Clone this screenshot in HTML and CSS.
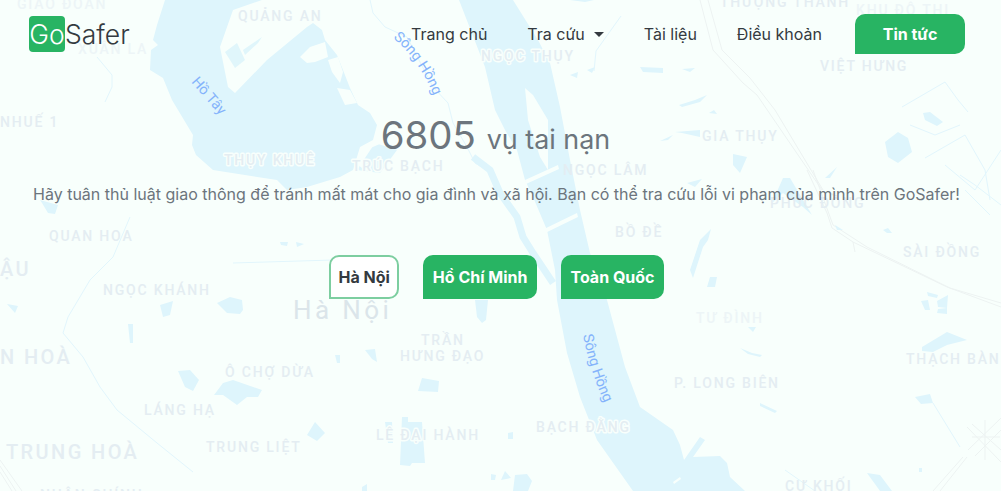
FILE: index.html
```html
<!DOCTYPE html>
<html lang="vi">
<head>
<meta charset="utf-8">
<title>GoSafer</title>
<link rel="stylesheet" href="styles.css">
</head>
<body>
<svg class="map" viewBox="0 0 1001 491" width="1001" height="491" aria-hidden="true">
  <g class="road">
    <polyline points="700,0 713,50 743,83 757,95 822,190"/>
    <polyline points="708,0 722,50 750,78 775,110 823,190"/>
    <polyline points="807,170 827,213 832,228 853,242 947,287 1001,307"/>
    <polyline points="813,170 833,225 867,247 950,288 1001,303"/>
    <polyline points="853,242 855,252"/>
    <polyline points="963,457 933,491"/>
    <polyline points="967,457 940,491"/>
    <polyline points="967,427 1001,462"/>
    <polyline points="972,424 1001,450"/>
    <polyline points="968,450 1001,418"/>
    <polyline points="975,456 1001,430"/>
    <polyline points="985,420 985,460"/>
    <polyline points="972,437 1000,437"/>
    <polyline points="0,460 22,491"/>
    <polyline points="0,466 16,491"/>
    <polyline points="0,472 12,491"/>
  </g>
  <g class="water">
    <polygon points="165,0 157,25 153,40 158,45 151,50 150,70 163,78 172,100 178,110 193,135 192,145 196,155 213,170 277,180 287,190 307,187 340,177 353,170 357,157 360,147 373,140 377,125 370,113 358,105 350,88 343,70 337,55 325,40 322,30 313,23 307,27 267,60 235,93 228,87 220,47 233,10 262,0"/>
    <polygon points="232,0 253,0 233,8"/>
    <polygon points="375,143 397,150 380,173 357,170"/>
    <polygon points="459,0 513,0 538,40 550,63 560,107 570,160 580,210 590,253 600,280 607,300 625,367 640,407 673,430 680,445 684,460 700,437 705,440 693,457 720,456 727,463 730,477 745,491 633,491 597,440 580,397 567,353 557,300 555,270 547,230 533,197 525,180 517,150 505,130 495,110 485,67"/>
    <polygon points="42,203 40,200 58,205 55,214 48,213"/>
    <polygon points="160,305 173,301 170,315 163,317"/>
    <polygon points="217,303 230,297 242,300 243,310 240,314 227,313"/>
    <polygon points="128,324 133,324 133,343 130,343"/>
    <polygon points="178,371 190,370 199,380 193,391 185,387"/>
    <polygon points="214,395 223,383 233,380 262,390 258,397 247,397 237,405 230,400 223,395"/>
    <polygon points="307,435 315,422 325,433 317,441"/>
    <polygon points="7,304 18,306 15,313"/>
    <polygon points="280,242 288,242 287,246 281,245"/>
    <polygon points="296,242 304,244 297,247"/>
    <polygon points="335,355 340,355 340,363 337,363"/>
    <polygon points="475,300 488,300 486,320 482,323 477,317"/>
    <polygon points="365,350 375,349 377,362 372,359"/>
    <polygon points="422,378 439,381 438,392 418,391"/>
    <polygon points="402,417 408,417 408,422 422,422 425,463 412,463 410,466 400,465"/>
    <polygon points="385,422 392,422 393,443 388,443"/>
    <polygon points="508,433 513,432 513,439 508,439"/>
    <polygon points="491,474 496,475 495,480 491,480"/>
    <polygon points="505,471 511,478 501,480"/>
    <polygon points="515,475 527,474 532,481 528,491 513,491"/>
    <polygon points="362,487 367,484 367,491 362,491"/>
    <polygon points="700,240 711,229 708,240 703,247 693,278 690,270"/>
    <polygon points="710,277 717,277 715,287 707,287"/>
    <polygon points="748,327 756,327 753,332"/>
    <polygon points="740,348 752,353 762,355 760,357 748,354"/>
    <polygon points="760,403 777,411 775,413 760,406"/>
    <polygon points="922,347 947,332 967,340 947,345 933,352 922,351"/>
    <polygon points="921,301 928,300 930,310 925,310"/>
    <polygon points="937,301 948,295 947,308 938,307"/>
    <polygon points="927,292 938,295 937,298 928,296"/>
    <polygon points="938,309 947,308 947,314 937,313"/>
    <polygon points="915,397 930,394 933,403 921,404"/>
    <polygon points="883,230 888,228 892,233 887,233"/>
    <polygon points="835,225 843,230 837,230"/>
    <polygon points="783,178 790,178 803,200 812,215 803,207 783,193 772,203"/>
    <polygon points="687,183 702,179 695,187"/>
    <polygon points="885,142 898,132 908,138 912,152 898,163 888,157"/>
    <polygon points="923,113 930,112 943,122 937,126 925,120"/>
    <polygon points="640,67 663,68 663,73 643,72"/>
    <polygon points="682,69 695,68 690,72"/>
    <polygon points="679,105 695,100 707,95 700,102 682,107"/>
    <polygon points="709,113 714,110 717,114"/>
    <polygon points="660,141 673,135 668,140"/>
    <polygon points="675,132 700,130 700,137 682,133"/>
    <polygon points="733,154 747,157 740,173 733,165"/>
    <polygon points="825,178 837,167 830,178"/>
    <polygon points="570,75 578,72 577,78"/>
    <polygon points="587,70 595,67 592,73"/>
    <polygon points="570,0 594,0 585,2"/>
    <polygon points="867,473 880,475 892,491 880,491"/>
    <polygon points="919,468 922,468 922,472 919,472"/>
  </g>
  <g class="stream">
    <polyline points="370,0 373,13 385,27 407,37 433,87 448,103 453,123 467,147 475,163 490,172"/>
    <polyline class="wide" points="473,157 490,170 500,193 517,217 523,237 533,253 553,283"/>
    <polyline points="130,217 113,257 90,280 68,317 63,333 83,357 100,387 117,410 157,443 193,472"/>
    <polyline points="233,263 333,260"/>
    <polyline points="97,57 112,75 112,87 105,102"/>
    <polyline points="621,16 596,51 594,71"/>
    <polyline points="933,403 960,447"/>
    <polyline points="902,107 945,82 958,100 968,112"/>
    <polyline points="910,125 935,135 960,125"/>
    <polyline points="925,158 965,135 985,170 990,200"/>
    <polyline points="945,165 975,190 1001,150"/>
    <polyline points="960,175 975,185 1001,205"/>
    <polyline points="965,190 990,215"/>
    <polyline points="785,470 815,491"/>
  </g>
  <g class="land">
    <polygon points="300,57 310,47 325,42 328,57 315,62 307,63"/>
    <polygon points="328,60 338,57 343,72 340,83 332,72"/>
    <polygon points="337,88 350,90 357,103 345,105"/>
    <polygon points="358,165 362,148 378,140 380,120 383,122 382,143 366,150 362,168"/>
    <polygon points="525,88 533,95 548,120 548,170 540,157 528,120"/>
    <polygon points="525,180 558,165 559,169 526,184"/>
    <polygon points="542,230 577,213 578,217 543,234"/>
    <polygon points="673,482 680,477 681,479 674,484"/>
  </g>
  <g class="pond">
    <polygon points="225,52 237,43 245,60 235,68"/>
    <polygon points="243,50 262,37 258,43 245,55"/>
  </g>
  <g class="label">
    <text x="17" y="9" class="faint">GIAO ĐOÀN</text>
    <text x="238" y="21">QUẢNG AN</text>
    <text x="78" y="54" class="faint">XUÂN LA</text>
    <text x="0" y="127">NHUẾ 1</text>
    <text x="224" y="165" class="halo">THỤY KHUÊ</text>
    <text x="352" y="171" class="halo">TRÚC BẠCH</text>
    <text x="481" y="61" class="halo">NGỌC THỤY</text>
    <text x="820" y="71">VIỆT HƯNG</text>
    <text x="856" y="15" class="faint">KHU ĐÔ THỊ</text>
    <text x="720" y="7">THƯỢNG THANH</text>
    <text x="563" y="175">NGỌC LÂM</text>
    <text x="702" y="141">GIA THỤY</text>
    <text x="770" y="208">PHÚC ĐỒNG</text>
    <text x="615" y="237" class="halo">BỒ ĐỀ</text>
    <text x="903" y="257">SÀI ĐỒNG</text>
    <text x="49" y="241">QUAN HOA</text>
    <text x="0" y="276" class="large">ẬU</text>
    <text x="103" y="295">NGỌC KHÁNH</text>
    <text x="293" y="319" class="city">Hà Nội</text>
    <text x="0" y="364" class="large">N HOÀ</text>
    <text x="421" y="345">TRẦN</text>
    <text x="400" y="361">HƯNG ĐẠO</text>
    <text x="225" y="377">Ô CHỢ DỪA</text>
    <text x="144" y="415">LÁNG HẠ</text>
    <text x="6" y="459" class="large">TRUNG HOÀ</text>
    <text x="206" y="452">TRUNG LIỆT</text>
    <text x="376" y="440" class="halo">LÊ ĐẠI HÀNH</text>
    <text x="536" y="432" class="halo">BẠCH ĐẰNG</text>
    <text x="674" y="388">P. LONG BIÊN</text>
    <text x="696" y="323" class="faint">TƯ ĐÌNH</text>
    <text x="906" y="364">THẠCH BÀN</text>
    <text x="785" y="491">CỰ KHỐI</text>
    <text x="40" y="500">NHÂN CHÍNH</text>
  </g>
  <defs>
    <path id="song1" d="M393,38 Q418,58 433,94"/>
    <path id="song2" d="M583,335 Q590,372 606,406"/>
    <path id="hotay" d="M191,82 L236,134"/>
  </defs>
  <g class="waterlabel">
    <text><textPath href="#song1">Sông Hồng</textPath></text>
    <text><textPath href="#song2">Sông Hồng</textPath></text>
    <text><textPath href="#hotay">Hồ Tây</textPath></text>
  </g>
</svg>

<header class="navbar">
  <a class="brand" href="#"><span class="brand-mark">Go</span>Safer</a>
  <nav class="menu">
    <a class="menu-link" href="#">Trang chủ</a>
    <a class="menu-link has-caret" href="#">Tra cứu</a>
    <a class="menu-link" href="#">Tài liệu</a>
    <a class="menu-link" href="#">Điều khoản</a>
    <a class="menu-cta" href="#">Tin tức</a>
  </nav>
</header>

<main class="hero">
  <h1 class="count"><span class="count-num">6805</span> <small class="count-unit">vụ tai nạn</small></h1>
  <p class="lead">Hãy tuân thủ luật giao thông để tránh mất mát cho gia đình và xã hội. Bạn có thể tra cứu lỗi vi phạm của mình trên GoSafer!</p>
  <div class="regions">
    <button class="region region-active" type="button">Hà Nội</button>
    <button class="region" type="button">Hồ Chí Minh</button>
    <button class="region" type="button">Toàn Quốc</button>
  </div>
</main>
</body>
</html>
```
FILE: styles.css
```css
* { box-sizing: border-box; }
html, body { margin: 0; padding: 0; }
body {
  position: relative;
  width: 1001px;
  height: 491px;
  overflow: hidden;
  background: #f8fffc;
  font-family: Inter, "Liberation Sans", sans-serif;
  color: #343a40;
}
a { text-decoration: none; color: inherit; }

/* map */
.map { position: absolute; left: 0; top: 0; display: block; }
.water polygon { fill: #def5fc; }
.stream polyline { fill: none; stroke: #e2f6fc; stroke-width: 1; }
.stream polyline.wide { stroke: #def5fc; stroke-width: 7; stroke-linejoin: round; }
.road polyline { fill: none; stroke: #edf3f2; stroke-width: 1; }
.land polygon { fill: #f8fffc; }
.pond polygon { fill: #e0f6fb; stroke: none; }
.label text {
  font-family: Roboto, sans-serif;
  font-size: 14px;
  font-weight: 500;
  letter-spacing: 1.8px;
  fill: #e4edf2;
}
.label .faint { fill: #edf5f7; }
.label .halo { stroke: #f8fffc; stroke-width: 3px; paint-order: stroke; stroke-linejoin: round; }
.label .large { font-size: 20px; letter-spacing: 2.4px; }
.label .city { font-size: 26px; font-weight: 400; letter-spacing: 3.4px; fill: #dbe5ea; }
.waterlabel text {
  font-family: Roboto, sans-serif;
  font-size: 14.5px;
  fill: #84b3fb;
}

/* navbar */
.navbar {
  position: relative;
  display: flex;
  align-items: center;
  justify-content: space-between;
  padding: 14px 36px 0 29px;
}
.brand {
  display: flex;
  align-items: center;
  font-size: 26.5px;
  font-weight: 300;
  line-height: 36px;
  color: #343a40;
}
.brand-mark {
  display: block;
  width: 36px;
  height: 36px;
  background: #28b463;
  color: #fff;
  border-radius: 4px;
  text-align: center;
}
.menu { display: flex; align-items: center; }
.menu-link {
  font-size: 16px;
  line-height: 40px;
  margin-right: 40px;
  color: #343a40;
}
.has-caret { display: flex; align-items: center; }
.has-caret::after {
  content: "";
  margin-left: 9px;
  border-top: 5px solid #343a40;
  border-left: 5px solid transparent;
  border-right: 5px solid transparent;
}
.menu-cta {
  display: block;
  width: 110px;
  height: 40px;
  margin-left: -7px;
  background: #28b463;
  color: #fff;
  font-size: 16px;
  font-weight: 700;
  line-height: 40px;
  text-align: center;
  border-radius: 10px 10px 10px 0;
}

/* hero */
.hero {
  position: relative;
  display: flex;
  flex-direction: column;
  align-items: center;
  padding: 57px 8px 0 0;
}
.count {
  margin: 0;
  font-weight: 400;
  font-size: 38.4px;
  line-height: 48px;
  color: #6c757d;
  transform: translateX(-1px);
}
.count-unit { font-size: 26.9px; }
.lead {
  margin: 19px 0 0;
  font-size: 16px;
  line-height: 24px;
  color: #6c757d;
  white-space: nowrap;
}
.regions { display: flex; gap: 24px; margin-top: 49px; }
.region {
  height: 44px;
  padding: 0 9.5px;
  border: 0;
  border-radius: 10px 10px 10px 0;
  background: #28b463;
  color: #fff;
  font-family: inherit;
  font-size: 16px;
  font-weight: 700;
}
.region-active {
  background: #fff;
  color: #343a40;
  border: 2px solid #7dcea0;
  padding: 0 7.5px;
}
```
